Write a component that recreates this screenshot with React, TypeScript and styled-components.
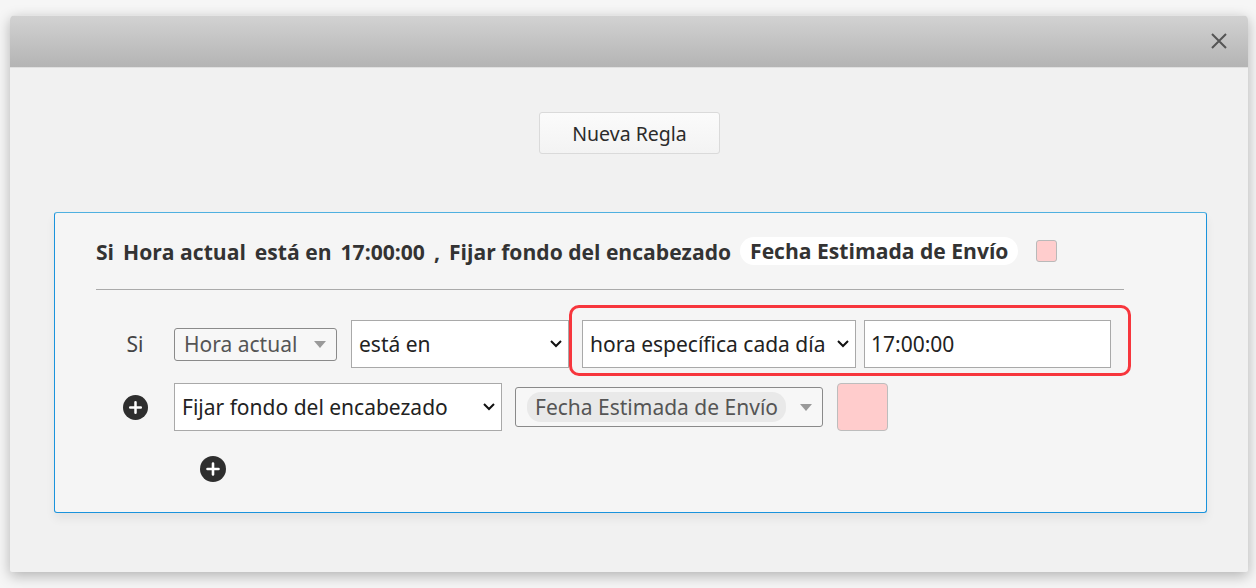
import React from "react";
import styled, { createGlobalStyle } from "styled-components";

const Global = createGlobalStyle`
  html, body { margin: 0; padding: 0; }
  body {
    background: #f6f6f6;
    font-family: "Noto Sans", "Open Sans", sans-serif;
    color: #333;
    width: 1256px;
    height: 588px;
    overflow: hidden;
  }
`;

const Page = styled.div`
  padding: 15px 8px 0 10px;
  height: 588px;
  box-sizing: border-box;
`;

const Modal = styled.div`
  width: 1238px;
  height: 557px;
  background: #f1f1f1;
  border-radius: 5px 5px 2px 2px;
  box-shadow: 0 4px 14px rgba(0, 0, 0, 0.28);
  display: flex;
  flex-direction: column;
  overflow: hidden;
`;

const Header = styled.div`
  height: 51px;
  flex: none;
  background: linear-gradient(#d2d2d2, #b4b4b4);
  border-top: 1px solid #e4e4e4;
  border-bottom: 1px solid #e0e0e0;
  display: flex;
  justify-content: flex-end;
  align-items: center;
  padding-right: 20px;
`;

const Close = styled.button`
  border: 0;
  background: transparent;
  padding: 0;
  width: 18px;
  height: 18px;
  display: flex;
  margin-top: -2px;
`;

const Body = styled.div`
  flex: 1;
  display: flex;
  flex-direction: column;
  align-items: center;
  padding-top: 44px;
`;

const NewRule = styled.button`
  width: 181px;
  height: 42px;
  border: 1px solid #dadada;
  border-radius: 3px;
  background: linear-gradient(#fbfbfb, #f3f3f3);
  font-family: "Noto Sans", sans-serif;
  font-size: 19.5px;
  color: #2b2b2b;
  margin-left: 1px;
  padding: 0;
`;

const Card = styled.div`
  align-self: flex-start;
  margin: 58px 0 0 44px;
  width: 1153px;
  height: 301px;
  box-sizing: border-box;
  background: #f5f5f5;
  border: 1px solid #1a93dc;
  border-top-color: #4fb0e0;
  border-radius: 3px;
  box-shadow: 0 6px 10px rgba(0, 0, 0, 0.06);
  padding: 23px 0 0 41px;
`;

const Summary = styled.div`
  display: flex;
  align-items: center;
  gap: 9px;
  font-family: "Open Sans", "Noto Sans", sans-serif;
  font-weight: 700;
  font-size: 21.1px;
  color: #333;
  height: 30px;
  white-space: nowrap;
`;

const Pill = styled.span`
  background: #fff;
  border-radius: 14px;
  padding: 0 10px;
  height: 28px;
  line-height: 28px;
`;

const MiniSwatch = styled.span`
  width: 19px;
  height: 20px;
  background: #ffcdcd;
  border: 1px solid #b9b9b9;
  border-radius: 3px;
  margin-left: 9px;
`;

const Divider = styled.div`
  width: 1028px;
  height: 1px;
  background: #aaa;
  margin-top: 23px;
`;

const Rows = styled.div`
  display: flex;
  flex-direction: column;
  margin-top: 30px;
`;

const Row = styled.div<{ $mt?: number }>`
  display: flex;
  align-items: center;
  margin-top: ${(p) => p.$mt ?? 0}px;
`;

const LeadCell = styled.div`
  width: 78px;
  flex: none;
  display: flex;
  justify-content: center;
  font-size: 21px;
  color: #444;
`;

const TagSelect = styled.div<{ $w: number; $h: number; $ml?: number }>`
  width: ${(p) => p.$w}px;
  height: ${(p) => p.$h}px;
  margin-left: ${(p) => p.$ml ?? 0}px;
  box-sizing: border-box;
  border: 1px solid #8a8a8a;
  border-radius: 3px;
  display: flex;
  align-items: center;
  justify-content: space-between;
  padding: 0 10px 0 9px;
  font-size: 21px;
  color: #555;
  background: #f7f7f7;
  white-space: nowrap;
  flex: none;
`;

const Caret = styled.span`
  width: 0;
  height: 0;
  border-left: 6px solid transparent;
  border-right: 6px solid transparent;
  border-top: 7px solid #9a9a9a;
`;

const NativeSelect = styled.div<{ $w: number; $ml?: number }>`
  width: ${(p) => p.$w}px;
  height: 48px;
  margin-left: ${(p) => p.$ml ?? 0}px;
  box-sizing: border-box;
  border: 1px solid #a9a9a9;
  background: #fff;
  display: flex;
  align-items: center;
  justify-content: space-between;
  padding: 0 5px 0 7px;
  font-size: 21px;
  color: #222;
  white-space: nowrap;
  flex: none;
`;

const TextInput = styled.div`
  width: 247px;
  height: 48px;
  margin-left: 8px;
  box-sizing: border-box;
  border: 1px solid #a9a9a9;
  background: #fff;
  display: flex;
  align-items: center;
  padding: 0 6px;
  font-size: 21px;
  color: #222;
`;

const Highlight = styled.div`
  position: relative;
  display: flex;
  margin-left: 13px;
  &::after {
    content: "";
    position: absolute;
    top: -15px;
    left: -13px;
    right: -20px;
    bottom: -8px;
    border: 3px solid #f7363d;
    border-radius: 10px;
    pointer-events: none;
  }
`;

const Chip = styled.span`
  background: #e9e9e9;
  border-radius: 14px;
  padding: 0 8px;
  height: 30px;
  line-height: 30px;
  margin-left: 2px;
  font-size: 21px;
  color: #555;
`;

const Swatch = styled.div`
  width: 51px;
  height: 48px;
  box-sizing: border-box;
  margin-left: 14px;
  background: #ffcccc;
  border: 1px solid #bdbdbd;
  border-radius: 4px;
`;

const PlusWrap = styled.div<{ $ml?: number }>`
  margin-left: ${(p) => p.$ml ?? 0}px;
  display: flex;
`;

const Chevron = () => (
  <svg width="14" height="10" viewBox="0 0 14 10">
    <polyline points="2,2 7,7 12,2" fill="none" stroke="#111" strokeWidth="2" />
  </svg>
);

const Plus = ({ size }: { size: number }) => (
  <svg width={size} height={size} viewBox="0 0 26 26">
    <circle cx="13" cy="13" r="13" fill="#2e2e2e" />
    <path d="M13 7.5v11M7.5 13h11" stroke="#fff" strokeWidth="2.6" strokeLinecap="round" />
  </svg>
);

export default function App() {
  return (
    <>
      <Global />
      <Page>
        <Modal>
          <Header>
            <Close aria-label="Cerrar">
              <svg width="18" height="18" viewBox="0 0 18 18">
                <path d="M2 2L16 16M16 2L2 16" stroke="#555" strokeWidth="2" />
              </svg>
            </Close>
          </Header>
          <Body>
            <NewRule>Nueva Regla</NewRule>
            <Card>
              <Summary>
                <span>Si</span>
                <span>Hora actual</span>
                <span>está en</span>
                <span>17:00:00</span>
                <span>,</span>
                <span>Fijar fondo del encabezado</span>
                <Pill>Fecha Estimada de Envío</Pill>
                <MiniSwatch />
              </Summary>
              <Divider />
              <Rows>
                <Row>
                  <LeadCell>Si</LeadCell>
                  <TagSelect $w={163} $h={33}>
                    <span>Hora actual</span>
                    <Caret />
                  </TagSelect>
                  <NativeSelect $w={218} $ml={14}>
                    <span>está en</span>
                    <Chevron />
                  </NativeSelect>
                  <Highlight>
                    <NativeSelect $w={274}>
                      <span>hora específica cada día</span>
                      <Chevron />
                    </NativeSelect>
                    <TextInput>17:00:00</TextInput>
                  </Highlight>
                </Row>
                <Row $mt={15}>
                  <LeadCell>
                    <Plus size={25} />
                  </LeadCell>
                  <NativeSelect $w={328}>
                    <span>Fijar fondo del encabezado</span>
                    <Chevron />
                  </NativeSelect>
                  <TagSelect $w={308} $h={40} $ml={13}>
                    <Chip>Fecha Estimada de Envío</Chip>
                    <Caret />
                  </TagSelect>
                  <Swatch />
                </Row>
                <Row $mt={25}>
                  <PlusWrap $ml={104}>
                    <Plus size={26} />
                  </PlusWrap>
                </Row>
              </Rows>
            </Card>
          </Body>
        </Modal>
      </Page>
    </>
  );
}
